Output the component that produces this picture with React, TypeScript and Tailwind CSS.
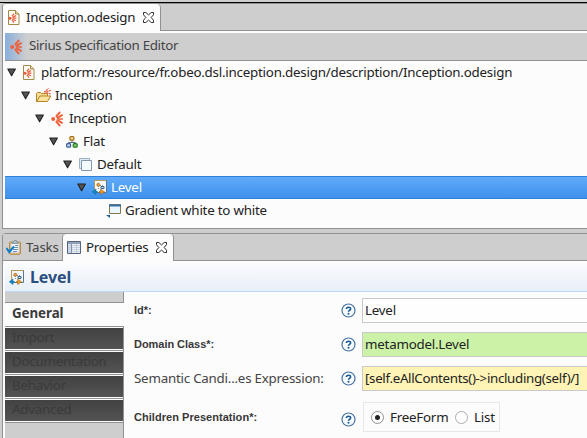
import type { ReactNode } from "react";

const SANS = "font-['Noto_Sans','Open_Sans',sans-serif]";

function Sirius({ className = "" }: { className?: string }) {
  return (
    <svg className={className} width="13" height="16" viewBox="0 0 13 16">
      <g stroke="#ee6038" strokeWidth="2" strokeLinecap="round" fill="none">
        <path d="M5.4 5.2 8.6 1.6M6.4 6.8 11 4.2M6.4 9.2 11 11.8M5.4 10.8l3.2 3.6" />
        <path d="M7 8h4.4" strokeWidth="1.3" />
      </g>
      <circle cx="2.2" cy="8" r="2" fill="#ee6038" />
    </svg>
  );
}

function FileIcon() {
  return (
    <svg width="12" height="15" viewBox="0 0 12 15">
      <path d="M.5.5h7l3.5 3.5v10.5H.5z" fill="#fdfbf2" stroke="#a28a4e" />
      <path d="M7.5.5V4H11" fill="#e8d69b" stroke="#a28a4e" />
      <g stroke="#ec5a3c" strokeWidth="1.2">
        <path d="M4 6.2 6 3.6M4.4 7.2l3.6-1.6M4.6 8.2H8.4M4.4 9.2l3.6 1.6M4 10l2 2.6" />
      </g>
      <circle cx="2" cy="8.2" r="1.5" fill="#ec5a3c" />
    </svg>
  );
}

function FolderIcon() {
  return (
    <svg width="16" height="15" viewBox="0 0 16 15">
      <path d="M.5 13.5v-8l1-1h3l1 1h6v2.5" fill="#f5dc94" stroke="#b58224" />
      <path d="M.7 13.5 4 8h10.8l-3.4 5.5z" fill="#fbe4a0" stroke="#b58224" />
      <g stroke="#ec5f43" strokeWidth="1.2" strokeDasharray="2 .6">
        <path d="M10 2.6 12.5.3M10.6 3.6l4.6-1.4M10.3 4.5l4.5 1.6" />
      </g>
      <circle cx="9" cy="3.7" r="1" fill="#ec5f43" />
    </svg>
  );
}

function FlatIcon() {
  return (
    <svg width="12" height="12" viewBox="0 0 12 12">
      <path d="M6 4v2.5M2.5 8V6.5h7V8" fill="none" stroke="#5a6b85" />
      <rect x="3.9" y=".6" width="4" height="3.6" rx="1" fill="#f9df91" stroke="#a06c16" strokeWidth="1.2" />
      <rect x=".6" y="7.6" width="4" height="3.6" rx="1" fill="#bcd1ef" stroke="#40609d" strokeWidth="1.2" />
      <rect x="7.2" y="7.6" width="4" height="3.6" rx="1" fill="#82cf55" stroke="#277c30" strokeWidth="1.2" />
    </svg>
  );
}

function LayersIcon() {
  return (
    <svg width="13" height="13" viewBox="0 0 13 13">
      <path d="M.5.5h10v10H.5z" fill="#dcecf7" stroke="#9fb1c5" />
      <path d="M2.5 2.5h10v10h-10z" fill="#f3fbff" stroke="#8297ae" />
    </svg>
  );
}

function LevelIcon() {
  return (
    <svg width="15" height="15" viewBox="0 0 15 15">
      <path d="M2.5.5h12v12h-12z" fill="#f2f8fa" stroke="#5f7488" />
      <path d="M2.5 12V.5H14" fill="none" stroke="#b59a5c" />
      <path d="M6.5 6v3.5M8 5.5h3.5" stroke="#7795ab" strokeDasharray="1 1" />
      <circle cx="6.3" cy="4.8" r="1.5" fill="#f0a23c" stroke="#a96620" strokeWidth=".8" />
      <path d="M9 6.5h3v2H9z" fill="#d5e8f6" stroke="#39618b" />
      <path d="M4 9v5.6L.2 11.8z" fill="#1689cf" stroke="#086392" strokeWidth=".5" />
      <path d="M8.6 9v5.6l4-2.8z" fill="#ed9b2c" stroke="#a35a0c" strokeWidth=".5" />
      <path d="M4 11.8h1.6" stroke="#1681c3" strokeWidth="1.4" />
      <path d="M7 11.8h1.6" stroke="#c9801f" strokeWidth="1.4" />
    </svg>
  );
}

function GradientIcon() {
  return (
    <svg width="15" height="14" viewBox="0 0 15 14">
      <path d="M3.5.5h11v9h-11z" fill="#eaf6fd" stroke="#847a4f" />
      <path d="M3 1.5h12" stroke="#3470a8" strokeWidth="2" />
      <path d="M0 11h4v3z" fill="#155f9b" />
    </svg>
  );
}

function TasksIcon() {
  return (
    <svg width="15" height="15" viewBox="0 0 15 15">
      <rect x="3.5" y="2" width="11" height="12.3" rx="1" fill="#e5ba72" stroke="#b98a49" />
      <path d="M5 3.5h8v9.3H5z" fill="#f4f7fb" stroke="#b1bfce" strokeWidth=".7" />
      <path d="M6 3.5V2h1.5L8 .5h2.3l.5 1.5H12v1.5z" fill="#b2bdca" stroke="#77899e" strokeWidth=".7" />
      <path d="M9 5.5h3M8 7.5h4M7 9.5h5M7 11.5h4" stroke="#7092c0" />
      <path d="m.5 8 2.7 4L8 6.5" fill="none" stroke="#087dc9" strokeWidth="2" />
    </svg>
  );
}

function TableIcon() {
  return (
    <svg width="14" height="13" viewBox="0 0 14 13">
      <path d="M.5.5h13v12H.5z" fill="#edf2f8" stroke="#54647e" />
      <path d="M1 1h12v2H1z" fill="#91a0b7" />
      <path d="M1 3h3.5v9H1z" fill="#d3dce9" />
      <path d="M1 4.5h12M1 6.5h12M1 8.5h12M1 10.5h12" stroke="#c6d0de" />
      <path d="M4.5 3v9" stroke="#8594ac" />
      <path d="M9.5 3v9" stroke="#c0cad9" />
    </svg>
  );
}

function CloseIcon() {
  return (
    <svg width="11" height="11" viewBox="0 0 11 11" className="shrink-0">
      <path d="M.5.5h2.3l2.7 2.4L8.2.5h2.3v2.3L8.1 5.5l2.4 2.7v2.3H8.2L5.5 8.1l-2.7 2.4H.5V8.2l2.4-2.7L.5 2.8z" fill="#fff" stroke="#2d2d2d" />
    </svg>
  );
}

function HelpIcon() {
  return (
    <svg width="15" height="15" viewBox="0 0 15 15" className="shrink-0">
      <circle cx="7.5" cy="7.5" r="6.5" fill="#f8fcff" stroke="#47729e" strokeWidth="1.2" />
      <path d="M5.4 6c.1-2.4 4.3-2.3 4.2-.1 0 1.4-2.1 1.5-2.1 2.9" fill="none" stroke="#165692" strokeWidth="1.6" />
      <circle cx="7.5" cy="10.8" r="1" fill="#165692" />
    </svg>
  );
}

function Arrow() {
  return (
    <svg width="10" height="9" viewBox="0 0 10 9" className="shrink-0">
      <path d="M.8 1h7.6L4.6 7.8z" fill="#555" stroke="#222" strokeWidth="1.1" strokeLinejoin="round" />
    </svg>
  );
}

type RowProps = { pad: string; inset?: string; label: string; icon: ReactNode; leaf?: boolean; selected?: boolean };

function TreeRow({ pad, inset = "", label, icon, leaf, selected }: RowProps) {
  return (
    <div
      className={`flex h-[23px] items-center whitespace-nowrap ${pad} ${
        selected ? "border-y border-[#2e80d9] bg-linear-to-b from-[#60aafb] to-[#3e91eb] text-white" : ""
      }`}
    >
      <span className="flex w-[15px] shrink-0 pb-px">{!leaf && <Arrow />}</span>
      <span className={`flex w-[19px] shrink-0 ${inset}`}>{icon}</span>
      <span className="pb-0.5">{label}</span>
    </div>
  );
}

function Field({ label, value, color, plain, tracking = "" }: { label: string; value: string; color: string; plain?: boolean; tracking?: string }) {
  return (
    <div className="flex h-[25px] items-center whitespace-nowrap">
      <span className={`w-[207px] shrink-0 pb-0.5 ${plain ? "text-[#444]" : "font-['Liberation_Sans',sans-serif] text-[11px] font-bold tracking-[-0.04px] text-[#383838]"}`}>
        {label}
      </span>
      <HelpIcon />
      <div className={`ml-1.5 flex h-[25px] flex-1 items-center border border-r-0 border-[#c9c9c9] pb-px pl-0.5 text-[#222] ${tracking} ${color}`}>
        {value}
      </div>
    </div>
  );
}

export default function App() {
  return (
    <div className={`h-[438px] w-[587px] overflow-hidden bg-[#cecece] text-[13.33px] leading-[18px] tracking-[-0.22px] text-[#222] ${SANS}`}>
      <div className="h-[3px] border-b border-black" />
      <section className="ml-0.5 h-[226px] rounded-tl border-y border-l border-[#919191] bg-[#fcfcfc]">
        <div className="flex h-[27px] bg-[#cecece]">
          <div className="flex w-[158px] items-center rounded-t border-r border-[#919191] bg-[#fcfcfc] pl-[5px]">
            <FileIcon />
            <span className="ml-1.5 w-[117px] shrink-0 pb-px">Inception.odesign</span>
            <CloseIcon />
          </div>
          <div className="flex-1 border-b border-[#919191]" />
        </div>
        <div className="ml-0.5 mt-0.5 flex h-7 items-center border-b border-[#919191] bg-linear-to-r from-[#89aedb] to-[#cecece] to-[22px] pl-[5px] text-[#444]">
          <Sirius />
          <span className="ml-1.5 pb-1 tracking-[-0.33px]">Sirius Specification Editor</span>
        </div>
        <div className="ml-0.5">
          <TreeRow pad="pl-[2px]" inset="pl-px" label="platform:/resource/fr.obeo.dsl.inception.design/description/Inception.odesign" icon={<FileIcon />} />
          <TreeRow pad="pl-[16px]" label="Inception" icon={<FolderIcon />} />
          <TreeRow pad="pl-[30px]" inset="pl-px" label="Inception" icon={<Sirius />} />
          <TreeRow pad="pl-[44px]" inset="pl-0.5" label="Flat" icon={<FlatIcon />} />
          <TreeRow pad="pl-[58px]" inset="pl-px" label="Default" icon={<LayersIcon />} />
          <TreeRow pad="pl-[72px]" label="Level" icon={<LevelIcon />} selected />
          <TreeRow pad="pl-[86px]" label="Gradient white to white" icon={<GradientIcon />} leaf />
        </div>
      </section>

      <section className="ml-0.5 mt-1 h-[205px] rounded-tl border-l border-t border-[#919191] bg-[#fcfcfc]">
        <div className="flex h-[27px] bg-[#cecece]">
          <div className="flex w-[59px] items-center border-b border-[#919191] pl-[3px] text-[#444]">
            <TasksIcon />
            <span className="ml-[5px]">Tasks</span>
          </div>
          <div className="flex w-[112px] items-center rounded-t border-x border-[#919191] bg-[#fcfcfc] pl-1">
            <TableIcon />
            <span className="ml-[5px] w-[70px] shrink-0 pb-px">Properties</span>
            <CloseIcon />
          </div>
          <div className="flex-1 border-b border-[#919191]" />
        </div>
        <div className="ml-0.5 flex h-[31px] items-center border-b border-[#bcdaf6] bg-linear-to-b from-[#fcfdfe] to-[#e7eff8]">
          <span className="ml-1 pt-0.5"><LevelIcon /></span>
          <span className="ml-1.5 pt-0.5 text-[16px] font-bold tracking-[-0.1px] text-[#2b4f80]">Level</span>
        </div>
        <div className="ml-0.5 flex h-[146px]">
          <nav className="w-[119px] shrink-0 bg-[#cecece] text-[#3b3b3b]">
            <div className="h-[11px] border-b border-r border-[#919191]" />
            <div className="flex h-6 items-center border-b border-[#919191] bg-[#fcfcfc] pb-[3px] pl-[7px] text-[13.33px] font-bold tracking-[-0.05px]">General</div>
            {["Import", "Documentation", "Behavior", "Advanced"].map((name) => (
              <div key={name} className="h-6 border-b border-r border-[#919191] bg-[#fcfcfc] py-px">
                <div className="flex h-[21px] items-center bg-linear-to-b from-[#424242] to-[#535353] pl-[7px] pb-[3px] text-[#3a3a3a]">{name}</div>
              </div>
            ))}
            <div className="h-4 border-r border-[#919191]" />
          </nav>
          <div className="min-w-0 flex-1 pl-2.5 pt-1.5">
            <div className="flex flex-col gap-[9px]">
              <Field label="Id*:" value="Level" color="bg-[#fefefe]" />
              <Field label="Domain Class*:" value="metamodel.Level" color="bg-[#ccf2a8]" />
              <Field label="Semantic Candi...es Expression:" value="[self.eAllContents()->including(self)/]" color="bg-[#fff4b5]" tracking="tracking-[-0.32px]" plain />
            </div>
            <div className="mt-[11px] flex h-[30px] items-center">
              <span className="w-[207px] shrink-0 font-['Liberation_Sans',sans-serif] text-[11px] font-bold tracking-[0.04px] text-[#383838]">Children Presentation*:</span>
              <span className="mt-1"><HelpIcon /></span>
              <div className="ml-[7px] flex h-[30px] w-[137px] items-center border border-[#e7e7e7] pl-[7px]">
                <span className="flex size-[13px] shrink-0 items-center justify-center rounded-full border border-[#919191] bg-white">
                  <span className="size-[5px] rounded-full bg-[#222]" />
                </span>
                <span className="ml-1.5 w-[65px] shrink-0">FreeForm</span>
                <span className="size-[13px] shrink-0 rounded-full border border-[#aaa] bg-white" />
                <span className="ml-1.5">List</span>
              </div>
            </div>
          </div>
        </div>
      </section>
    </div>
  );
}
